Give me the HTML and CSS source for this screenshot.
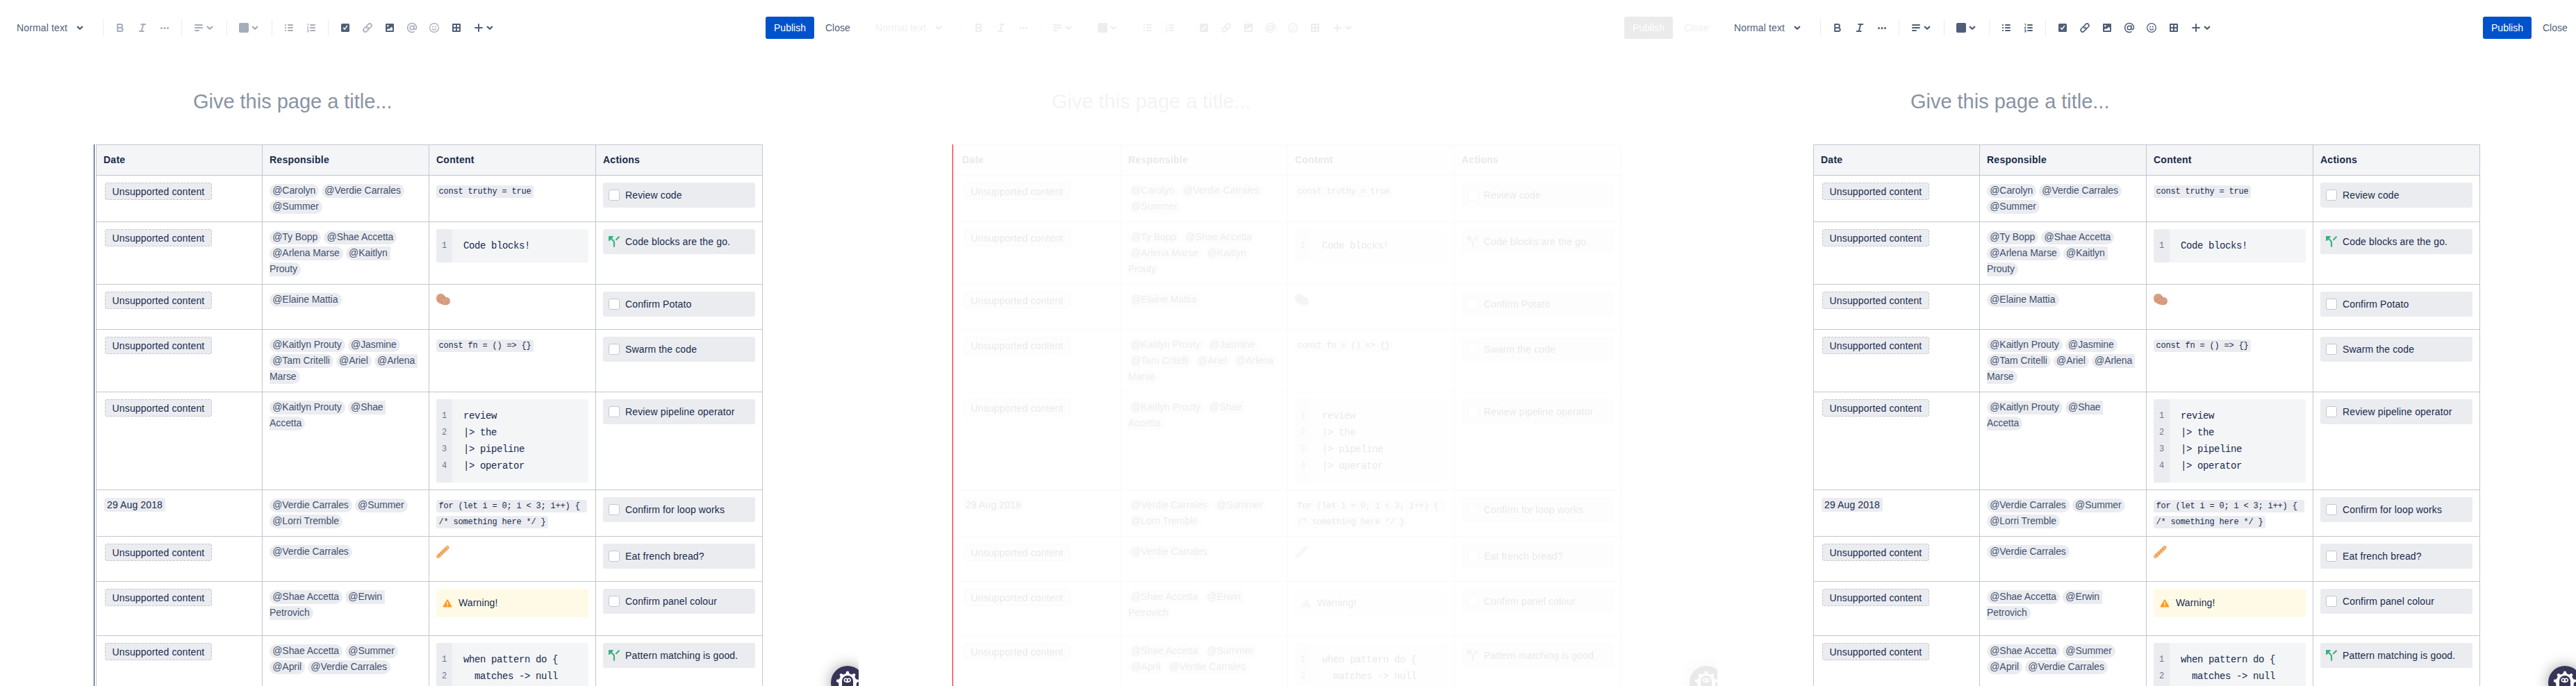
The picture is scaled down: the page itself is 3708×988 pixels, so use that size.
FILE: index.html
```html
<!DOCTYPE html>
<html lang="en">
<head>
<meta charset="utf-8">
<title>Editor table comparison</title>
<link rel="stylesheet" href="styles.css">
</head>
<body>
<svg class="sprite" xmlns="http://www.w3.org/2000/svg">
  <symbol id="chevron" viewBox="0 0 24 24"><path d="M8.7 10.6 12 13.8l3.3-3.2" fill="none" stroke="currentColor" stroke-width="2.2" stroke-linecap="round" stroke-linejoin="round"/></symbol>
  <symbol id="bold" viewBox="0 0 24 24"><path d="M8.2 7h4.3a2.4 2.4 0 0 1 0 4.9H8.2zM8.2 11.9h5a2.55 2.55 0 0 1 0 5.1h-5z" fill="none" stroke="currentColor" stroke-width="2" stroke-linejoin="round"/></symbol>
  <symbol id="italic" viewBox="0 0 24 24"><path d="M10.3 7h6M7.7 17h6M13.3 7l-2.6 10" fill="none" stroke="currentColor" stroke-width="2" stroke-linecap="round"/></symbol>
  <symbol id="more" viewBox="0 0 24 24"><g fill="currentColor"><circle cx="7.5" cy="12.4" r="1.5"/><circle cx="12" cy="12.4" r="1.5"/><circle cx="16.5" cy="12.4" r="1.5"/></g></symbol>
  <symbol id="align" viewBox="0 0 24 24"><path d="M7 8h10M7 12h10M7 16h5" stroke="currentColor" stroke-width="2" stroke-linecap="round"/></symbol>
  <symbol id="color" viewBox="0 0 24 24"><rect x="5" y="5" width="14" height="14" rx="2" fill="currentColor"/></symbol>
  <symbol id="bullets" viewBox="0 0 24 24"><path d="M11 8h6M11 12h6M11 16h6" stroke="currentColor" stroke-width="2" stroke-linecap="round"/><g fill="currentColor"><rect x="6" y="7" width="2" height="2" rx=".6"/><rect x="6" y="11" width="2" height="2" rx=".6"/><rect x="6" y="15" width="2" height="2" rx=".6"/></g></symbol>
  <symbol id="numbers" viewBox="0 0 24 24"><path d="M11 8h6M11 12h6M11 16h6" stroke="currentColor" stroke-width="2" stroke-linecap="round"/><path d="M6.2 6.5h1.3V9M6 11h2l-1.8 2H8.300M6 15h2v3H6M6.600 16.500H8" fill="none" stroke="currentColor" stroke-width="1"/></symbol>
  <symbol id="task" viewBox="0 0 24 24"><rect x="6" y="6" width="12" height="12" rx="1.500" fill="currentColor"/><path d="m9.500 12.300 1.700 1.900 3.300-4.900" fill="none" stroke="#fff" stroke-width="1.500" stroke-linecap="round" stroke-linejoin="round"/></symbol>
  <symbol id="link" viewBox="0 0 24 24"><g transform="rotate(-45 12 12)" fill="none" stroke="currentColor" stroke-width="1.600" stroke-linecap="round"><path d="M12.500 9.300H7.500a2.700 2.700 0 0 0 0 5.400h2.800a2.700 2.700 0 0 0 2.700-2.700"/><path d="M11.500 14.700H16.500a2.700 2.700 0 0 0 0-5.400h-2.800A2.700 2.700 0 0 0 11 12"/></g></symbol>
  <symbol id="image" viewBox="0 0 24 24"><rect x="6" y="6" width="12" height="12" rx="1" fill="currentColor"/><circle cx="9.300" cy="9.300" r="1.200" fill="#fff"/><path d="M8 16v-1.500l1.700-1.600 1.500 1.100 3.300-3.300L16 12.300V16z" fill="#fff"/></symbol>
  <symbol id="mention" viewBox="0 0 24 24"><g fill="none" stroke="currentColor" stroke-width="1.500" stroke-linecap="round"><circle cx="12" cy="12" r="2.800"/><path d="M14.800 9v3.700c0 2.600 3.700 2.300 3.700-.9A6.500 6.500 0 1 0 15 17.700"/></g></symbol>
  <symbol id="emoji" viewBox="0 0 24 24"><circle cx="12" cy="12" r="6.400" fill="none" stroke="currentColor" stroke-width="1.300"/><circle cx="10.200" cy="10.400" r="1" fill="currentColor"/><circle cx="13.800" cy="10.400" r="1" fill="currentColor"/><path d="M9.500 13.300a2.600 2.600 0 0 0 5 0" fill="none" stroke="currentColor" stroke-width="1.300" stroke-linecap="round"/></symbol>
  <symbol id="table" viewBox="0 0 24 24"><path d="M7 7h10v10H7zM12 7v10M7 12h10" fill="none" stroke="currentColor" stroke-width="2" stroke-linejoin="round"/></symbol>
  <symbol id="plus" viewBox="0 0 24 24"><path d="M12 7v10M7 12h10" stroke="currentColor" stroke-width="2" stroke-linecap="round"/></symbol>
  <symbol id="decision" viewBox="0 0 16 16"><path d="M8 14.800V9.500Q8 7.900 6.900 6.800L2 2" fill="none" stroke="#36b37e" stroke-width="2.200" stroke-linecap="round"/><path d="M11 5.200 14.900 1.300" stroke="#36b37e" stroke-width="2.200" stroke-linecap="round"/><path d="M0 .6Q0 0 .6 0H6.200q1 .2.700 1.100L1.300 6.900Q0 7.300 0 6.400z" fill="#36b37e"/></symbol>
  <symbol id="warning" viewBox="0 0 14 12"><path d="M6.100.9q.9-1.500 1.800 0l5.200 9q.6 1.600-1 1.600H1.900q-1.600 0-1-1.600z" fill="#ff991f"/><path d="M7 4v3.500" stroke="#fffae6" stroke-width="1.500" stroke-linecap="round"/><circle cx="7" cy="9.600" r=".8" fill="#fffae6"/></symbol>
  <symbol id="potato" viewBox="0 0 20 20"><path d="M0 9C-.2 4.700 3 1.600 7 1.900c3 .2 4.800 2 5.700 4.300.6 1 2.200.6 3.600 1.100 2.400.8 3.700 2.900 3.700 5.200 0 3.500-2.500 5.900-6.300 6-3.500.1-5.800-1.500-8.200-2.300C2.300 15.200.1 12.800 0 9z" fill="#d99e82"/><g fill="#c1694f"><circle cx="11.500" cy="6.800" r=".8"/><circle cx="5.600" cy="9.100" r=".5"/><circle cx="3.300" cy="11.200" r=".7"/><circle cx="8" cy="14.300" r=".8"/><circle cx="8.600" cy="8" r=".4"/><circle cx="16.600" cy="14.700" r=".6"/></g></symbol>
  <symbol id="baguette" viewBox="0 0 20 20"><path d="M2.700 16.400 16 3.600" stroke="#f2ab5f" stroke-width="5.200" stroke-linecap="round"/><path d="m3.800 13.300 1.900 3M6.800 10.400l1.900 3M9.800 7.500l1.900 3M12.800 4.600l1.900 3" stroke="#ce8b4c" stroke-width=".9" stroke-linecap="round"/><path d="m2 15.500 2 2.200M5.300 12l2 3M8.300 9l2 3M11.300 6l2 3M14.500 3l2 3" stroke="#ffc889" stroke-width="1.1" stroke-linecap="round"/></symbol>
  <symbol id="gear" viewBox="0 0 48 48"><circle cx="24" cy="24" r="24" fill="#363457"/><circle cx="24" cy="24" r="10.500" fill="none" stroke="#fff" stroke-width="5"/><g fill="#fff"><path id="tooth" d="M20.800 13 22.500 7.800h3L27.200 13z"/><use href="#tooth" transform="rotate(40 24 24)"/><use href="#tooth" transform="rotate(80 24 24)"/><use href="#tooth" transform="rotate(120 24 24)"/><use href="#tooth" transform="rotate(160 24 24)"/><use href="#tooth" transform="rotate(200 24 24)"/><use href="#tooth" transform="rotate(240 24 24)"/><use href="#tooth" transform="rotate(280 24 24)"/><use href="#tooth" transform="rotate(320 24 24)"/></g><path d="M16 32V22a8 8 0 0 1 16 0v10z" fill="#363457"/><circle cx="21.500" cy="20.500" r="2.200" fill="none" stroke="#fff" stroke-width="1.500"/><circle cx="26" cy="20.500" r="2.200" fill="none" stroke="#fff" stroke-width="1.500"/><path d="M22.200 23.500h3.200" stroke="#fff" stroke-width="1.300"/></symbol>
</svg>
<main class="board" id="board"></main>
<script src="app.js"></script>
</body>
</html>
```
FILE: styles.css
```css
* { box-sizing: border-box; }
body {
  margin: 0;
  background: #fff;
  color: #172b4d;
  font: 14px/23px "Liberation Sans", Arial, sans-serif;
  overflow: hidden;
}
.sprite { position: absolute; width: 0; height: 0; }
svg { display: block; }
.board { display: grid; grid-template-columns: repeat(3, 1236px); height: 988px; }
.panel { position: relative; height: 988px; overflow: hidden; }
.layer { position: relative; height: 988px; overflow: hidden; }
.ghost .layer { filter: grayscale(1) opacity(.11); }

.toolbar { display: flex; align-items: center; height: 80px; padding-left: 16px; color: #505f79; }
.block-type { display: flex; align-items: center; width: 124px; padding-left: 8px; letter-spacing: .14px; }
.block-type .icon { margin-left: 6px; }
.icon { width: 24px; height: 24px; }
.group { display: flex; align-items: center; padding-right: 8px; }
.group::before { content: ""; width: 1px; height: 24px; margin-right: 8px; background: #ebecf0; }
.block-type + .group { margin-left: 8px; }
.tool { display: flex; width: 32px; padding: 0 4px; }
.tool-menu { width: 48px; }
.tool-menu .icon { flex: none; }
.tool-menu .icon + .icon { margin-left: -8px; }
.muted { color: #a5adba; }
.actions { display: flex; align-items: center; margin-left: auto; margin-right: 13px; }
.publish { width: 70px; height: 32px; border-radius: 3px; background: #0052cc; color: #fff; line-height: 32px; text-align: center; }
.close { width: 35px; margin-left: 16px; line-height: 32px; }

.page-title { margin: 0; padding: 49px 0 0 278px; height: 128px; font-size: 29px; font-weight: 400; line-height: 35px; letter-spacing: -.02px; color: #8993a4; }
.indicator { position: absolute; left: 135px; top: 208px; width: 1px; bottom: 0; background: #172b4d; }
.indicator.changed { background: #f00; }

.table { width: 960px; margin-left: 138px; border-right: 1px solid #c1c7d0; }
.row { display: grid; grid-template-columns: 239px 240px 240px 240px; border-top: 1px solid #c1c7d0; }
.cell { padding: 10px; border-left: 1px solid #c1c7d0; white-space: pre-wrap; letter-spacing: -.005em; }
.cell:nth-child(2) { padding-right: 12px; }
.head { height: 44px; background: #f4f5f7; font-weight: 700; }
.head .cell { letter-spacing: .25px; }
.unsupported { width: 154px; height: 25px; margin-left: 2px; border: 1px dashed #c1c7d0; border-radius: 3px; background: #ebecf0; line-height: 24px; text-align: center; letter-spacing: .15px; }
.date { margin-left: 1px; padding: 2px 4px; border-radius: 3px; background: #ebecf0; letter-spacing: .12px; }
.mention { padding: 0 .3em 2px .23em; border: 1px solid transparent; border-radius: 20px; background: #ebecf0; color: #42526e; }
.code { padding: 2px .3em; border-radius: 3px; background: #ebecf0; font: 12px "Liberation Mono", monospace; letter-spacing: -.2px; box-decoration-break: clone; -webkit-box-decoration-break: clone; }
.code-block { display: flex; border-radius: 3px; background: #f4f5f7; font: 14px/24px "Liberation Mono", monospace; letter-spacing: -.4px; white-space: pre; }
.gutter { width: 23px; padding: 12px 0; border-radius: 3px; background: #ebecf0; color: #6b778c; font-size: 12px; text-align: center; }
.source { padding: 12px 0 12px 16px; }
.action { display: flex; height: 36px; padding: 10px 8px; border-radius: 3px; background: #ebecf0; line-height: 17px; letter-spacing: .14px; }
.action .mark { flex: none; width: 16px; height: 16px; margin-right: 8px; }
.checkbox { border: 1px solid #c1c7d0; border-radius: 3px; background: #fff; }
.warning { display: flex; align-items: center; height: 41px; padding-left: 9px; border-radius: 3px; background: #fffae6; letter-spacing: .12px; }
.warning svg { width: 14px; height: 12px; margin-right: 9px; }
.emoji { width: 20px; height: 20px; }
.emoji.potato { margin-top: 1px; }
.emoji.baguette { margin-top: 1.5px; }
.help { position: absolute; left: 1196px; top: 959px; width: 48px; height: 48px; border-radius: 50%; box-shadow: 0 0 20px rgba(0, 0, 0, .38); }
.help svg { width: 48px; height: 48px; }
```
FILE: app.js
```js
const icon = (id, cls = 'icon') => `<svg class="${cls}"><use href="#${id}"/></svg>`;
const people = names => names.split(',').map(n => `<span class="mention">@${n}</span>`).join(' ');
const code = text => `<code class="code">${text}</code>`;
const block = lines => `<div class="code-block"><div class="gutter">${lines.map((_, i) => i + 1).join('\n')}</div><div class="source">${lines.join('\n')}</div></div>`;
const task = text => `<div class="action"><span class="mark checkbox"></span>${text}</div>`;
const decision = text => `<div class="action">${icon('decision', 'mark')}${text}</div>`;
const unsupported = '<div class="unsupported">Unsupported content</div>';

const rows = [
  [67, unsupported, people('Carolyn,Verdie Carrales,Summer'), code('const truthy = true'), task('Review code')],
  [90, unsupported, people('Ty Bopp,Shae Accetta,Arlena Marse,Kaitlyn Prouty'), block(['Code blocks!']), decision('Code blocks are the go.')],
  [65, unsupported, people('Elaine Mattia'), icon('potato', 'emoji potato'), task('Confirm Potato')],
  [90, unsupported, people('Kaitlyn Prouty,Jasmine,Tam Critelli,Ariel,Arlena Marse'), code('const fn = () =&gt; {}'), task('Swarm the code')],
  [141, unsupported, people('Kaitlyn Prouty,Shae Accetta'), block(['review', '|&gt; the', '|&gt; pipeline', '|&gt; operator']), task('Review pipeline operator')],
  [67, '<span class="date">29 Aug 2018</span>', people('Verdie Carrales,Summer,Lorri Tremble'), code('for (let i = 0; i &lt; 3; i++) { /* something here */ }'), task('Confirm for loop works')],
  [65, unsupported, people('Verdie Carrales'), icon('baguette', 'emoji baguette'), task('Eat french bread?')],
  [78, unsupported, people('Shae Accetta,Erwin Petrovich'), `<div class="warning">${icon('warning', '')}Warning!</div>`, task('Confirm panel colour')],
  [120, unsupported, people('Shae Accetta,Summer,April,Verdie Carrales'), block(['when pattern do {', '  matches -&gt; null']), decision('Pattern matching is good.')]
];

const table = `<div class="table"><div class="row head">${['Date', 'Responsible', 'Content', 'Actions'].map(h => `<div class="cell">${h}</div>`).join('')}</div>${
  rows.map(([height, ...cells]) => `<div class="row" style="height:${height}px">${cells.map(c => `<div class="cell">${c}</div>`).join('')}</div>`).join('')}</div>`;

function toolbar(disabled) {
  const tool = (id, canMute) => `<span class="tool${disabled && canMute ? ' muted' : ''}">${icon(id)}</span>`;
  const menu = (id, canMute) => `<span class="tool tool-menu${disabled && canMute ? ' muted' : ''}">${icon(id)}${icon('chevron')}</span>`;
  const group = content => `<div class="group">${content}</div>`;
  return `<header class="toolbar"><span class="block-type">Normal text${icon('chevron')}</span>${
    group(tool('bold', true) + tool('italic', true) + tool('more', true))}${
    group(menu('align', true))}${group(menu('color', true))}${
    group(tool('bullets', true) + tool('numbers', true))}${
    group(tool('task') + tool('link', true) + tool('image') + tool('mention', true) + tool('emoji', true) + tool('table') + menu('plus'))}
    <div class="actions"><span class="publish">Publish</span><span class="close">Close</span></div></header>`;
}

function panel(kind, disabled, indicator) {
  return `<section class="panel ${kind}"><div class="layer">${toolbar(disabled)}<h1 class="page-title">Give this page a title...</h1>${table}<div class="help">${icon('gear', '')}</div></div>${
    indicator ? `<div class="indicator ${indicator}"></div>` : ''}</section>`;
}

document.getElementById('board').innerHTML =
  panel('before', true, 'original') + panel('ghost', false, 'changed') + panel('after', false, '');
```
